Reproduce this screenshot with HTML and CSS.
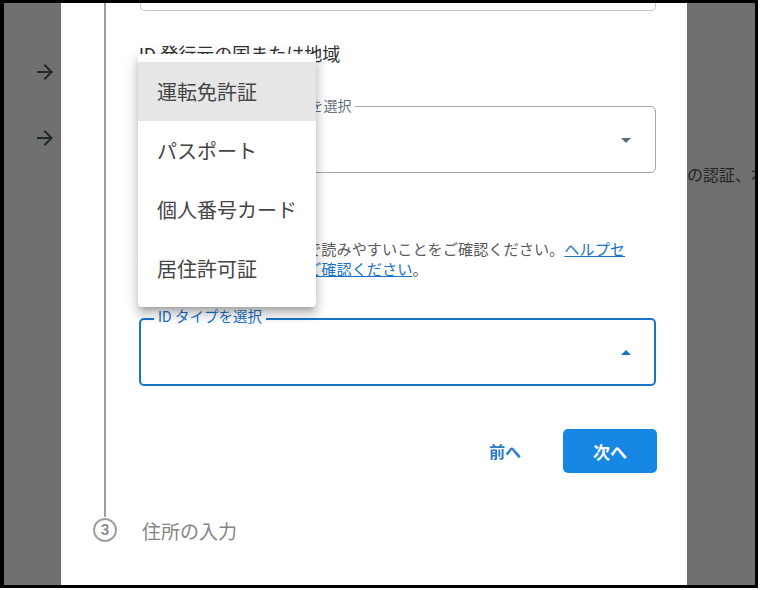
FILE: index.html
```html
<!DOCTYPE html>
<html lang="ja">
<head>
<meta charset="utf-8">
<link rel="stylesheet" href="styles.css">
</head>
<body>
<div class="frame">
  <div class="side side-left">
    <svg class="bg-arrow" width="24" height="24" viewBox="0 0 24 24"><path d="M12 4l-1.41 1.41L16.17 11H4v2h12.17l-5.58 5.59L12 20l8-8z" fill="#1e2a2a"/></svg>
    <svg class="bg-arrow second" width="24" height="24" viewBox="0 0 24 24"><path d="M12 4l-1.41 1.41L16.17 11H4v2h12.17l-5.58 5.59L12 20l8-8z" fill="#1e2a2a"/></svg>
  </div>
  <div class="modal">
    <div class="step-body">
      <div class="rail"></div>
      <div class="content">
        <div class="prev-field"></div>
        <div class="heading first">ID 発行元の国または地域</div>
        <div class="select">
          <span class="notch-label">ID 発行元の国または地域を選択</span>
          <svg class="caret" width="10" height="5" viewBox="0 0 10 5"><path d="M0 0h10L5 5z" fill="#5b6b78"/></svg>
        </div>
        <div class="heading second">ID タイプ</div>
        <p class="help">身分証明書の写真が鮮明で読みやすいことをご確認ください。<a href="#" class="link">ヘルプセンターのガイドラインをご確認ください</a>。</p>
        <div class="select focused">
          <span class="notch-label">ID タイプを選択</span>
          <svg class="caret" width="10" height="5" viewBox="0 0 10 5"><path d="M0 5h10L5 0z" fill="#1a73c8"/></svg>
        </div>
        <div class="actions">
          <button class="btn-text">前へ</button>
          <button class="btn-primary">次へ</button>
        </div>
        <ul class="menu">
          <li class="item active">運転免許証</li>
          <li class="item">パスポート</li>
          <li class="item">個人番号カード</li>
          <li class="item">居住許可証</li>
        </ul>
      </div>
    </div>
    <div class="step3">
      <span class="step-num">3</span>
      <span class="step-title">住所の入力</span>
    </div>
  </div>
  <div class="side side-right">
    <span class="bg-text">の認証、本</span>
  </div>
</div>
</body>
</html>
```
FILE: styles.css
```css
* { box-sizing: border-box; }
body {
  margin: 0;
  background: #ffffff;
  font-family: Roboto, "Noto Sans CJK JP", sans-serif;
}
.frame {
  width: 758px;
  height: 588px;
  border: 3px solid #000;
  border-left-width: 4px;
  background: #707070;
  display: flex;
  overflow: hidden;
}
.side { flex: none; overflow: hidden; }
.side-left {
  width: 57px;
  display: flex;
  flex-direction: column;
  align-items: flex-start;
  padding-left: 29px;
  padding-top: 57px;
}
.bg-arrow { display: block; }
.bg-arrow.second { margin-top: 42px; }
.side-right {
  flex: 1;
  padding-top: 161px;
  white-space: nowrap;
}
.bg-text {
  font-size: 16px;
  line-height: 24px;
  color: #252525;
  display: block;
}
.modal {
  width: 626px;
  flex: none;
  background: #fff;
  display: flex;
  flex-direction: column;
}
.step-body {
  height: 514px;
  display: flex;
  padding-left: 43px;
}
.rail {
  width: 2px;
  background: #9e9e9e;
  flex: none;
}
.content {
  position: relative;
  margin-left: 33px;
  width: 517px;
  display: flex;
  flex-direction: column;
}
.prev-field {
  margin-left: 1px;
  height: 8px;
  border: 1px solid #c4c4c4;
  border-top: none;
  border-radius: 0 0 5px 5px;
}
.heading {
  font-size: 18px;
  line-height: 24px;
  color: #303030;
}
.heading.first { margin-top: 32px; }
.heading.second { margin-top: 25px; }
.select {
  position: relative;
  height: 67px;
  margin-top: 39px;
  border: 1px solid #a8a8a8;
  border-radius: 5px;
}
.select.focused {
  margin-top: 38px;
  height: 68px;
  border: 2px solid #1a73c8;
}
.notch-label {
  position: absolute;
  left: 9px;
  top: -10px;
  padding: 0 4px;
  background: #fff;
  font-size: 14px;
  line-height: 18px;
  color: #5f7080;
  white-space: nowrap;
}
.focused .notch-label {
  left: 13px;
  top: -11px;
  font-size: 14.5px;
  color: #1a73c8;
}
.caret {
  position: absolute;
  right: 24px;
  top: 31px;
}
.focused .caret { right: 23px; top: 30px; }
.help {
  margin: 18px 0 0;
  max-width: 498px;
  font-size: 15.2px;
  line-height: 20px;
  color: #5a5a5a;
}
.link { color: #1a73c8; text-decoration: underline; }
.actions {
  margin-top: 43px;
  display: flex;
  justify-content: flex-end;
  align-items: center;
  gap: 26px;
}
.btn-text, .btn-primary {
  font-family: Roboto, "Noto Sans CJK JP", sans-serif;
  font-size: 16px;
  font-weight: 700;
  border: none;
  height: 44px;
  border-radius: 5px;
  cursor: pointer;
}
.btn-text {
  background: none;
  color: #2a7cc4;
  padding: 0 16px;
}
.btn-primary {
  width: 94px;
  margin-right: -1px;
  background: #1688e3;
  color: #fff;
  font-size: 17px;
}
.menu {
  position: absolute;
  left: -1px;
  top: 51px;
  width: 178px;
  margin: 0;
  padding: 8px 0 9px;
  list-style: none;
  background: #fff;
  border-radius: 4px;
  box-shadow: 0 5px 5px -3px rgba(0,0,0,.2), 0 8px 10px 1px rgba(0,0,0,.14), 0 3px 14px 2px rgba(0,0,0,.12);
}
.item {
  height: 59px;
  display: flex;
  align-items: center;
  padding-left: 19px;
  font-size: 20px;
  color: #454545;
}
.item.active { background: #e6e6e6; }
.step3 {
  margin-top: 1px;
  display: flex;
  align-items: center;
  padding-left: 32px;
  height: 24px;
}
.step-num {
  width: 24px;
  height: 24px;
  border: 2px solid #a0a0a0;
  border-radius: 50%;
  display: flex;
  align-items: center;
  justify-content: center;
  font-size: 15px;
  font-weight: 700;
  color: #8a8a8a;
}
.step-title {
  margin-left: 25px;
  font-size: 19px;
  color: #858585;
}
```
